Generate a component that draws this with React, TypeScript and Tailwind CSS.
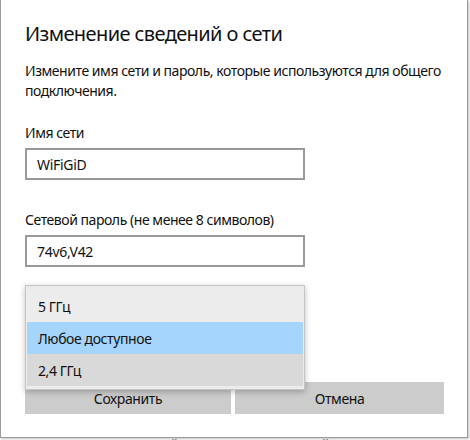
import React from "react";

const font = { fontFamily: '"Noto Sans", "Open Sans", sans-serif' };

export default function App() {
  return (
    <div
      className="relative w-[470px] h-[440px] overflow-hidden bg-white text-black"
      style={font}
    >
      <div className="relative w-[468px] h-[438px] bg-white border-l border-r border-b border-[#9c9c9c] shadow-[1px_1px_2px_rgba(0,0,0,0.25)] pl-[24px] pt-[20px] z-10">
        <div className="text-[20px] leading-[28px] tracking-[-0.6px] text-[#111]">Изменение сведений о сети</div>
        <div className="mt-[13px] text-[14px] leading-[20px] tracking-[-0.45px] w-[430px] text-[#111]">
          Измените имя сети и пароль, которые используются для общего подключения.
        </div>
        <div className="mt-[22px] text-[14px] leading-[20px] tracking-[-0.45px] text-[#111]">Имя сети</div>
        <div className="mt-[5px] w-[280px] h-[32px] border-2 border-[#999999] flex items-center pl-[10px] text-[14px] tracking-[-0.3px] text-[#111]">
          WiFiGiD
        </div>
        <div className="mt-[30px] text-[14px] leading-[20px] tracking-[-0.45px] text-[#111]">
          Сетевой пароль (не менее 8 символов)
        </div>
        <div className="mt-[5px] w-[280px] h-[32px] border-2 border-[#999999] flex items-center pl-[10px] text-[14px] tracking-[-0.3px] text-[#111]">
          74v6,V42
        </div>
        <div className="mt-[115px] flex gap-[4px] text-[14px] tracking-[-0.4px] text-[#111]">
          <div className="w-[206px] h-[32px] bg-[#cccccc] flex items-center justify-center">Сохранить</div>
          <div className="w-[209px] h-[32px] bg-[#cccccc] flex items-center justify-center">Отмена</div>
        </div>
        <div className="absolute left-[24px] top-[285px] w-[280px] h-[105px] bg-[#ececec] border border-[#c4c4c4] shadow-[0_2px_6px_rgba(0,0,0,0.25)] pt-[4px] px-[1px] text-[14px] tracking-[-0.4px] text-[#111]">
          <div className="h-[32px] flex items-center pl-[11px]">5 ГГц</div>
          <div className="h-[32px] flex items-center pl-[11px] bg-[#a6d5fb]">Любое доступное</div>
          <div className="h-[32px] flex items-center pl-[11px] bg-[#d9d9d9]">2,4 ГГц</div>
        </div>
      </div>
      <div className="absolute left-[135px] top-[435px] text-[14px] leading-[20px] tracking-[-0.4px] text-[#777] whitespace-nowrap">
        устройства подключения:
      </div>
      <div className="absolute left-[322px] top-[435px] text-[14px] leading-[20px] tracking-[-0.4px] text-[#777] whitespace-nowrap">
        ii из 8
      </div>
    </div>
  );
}
